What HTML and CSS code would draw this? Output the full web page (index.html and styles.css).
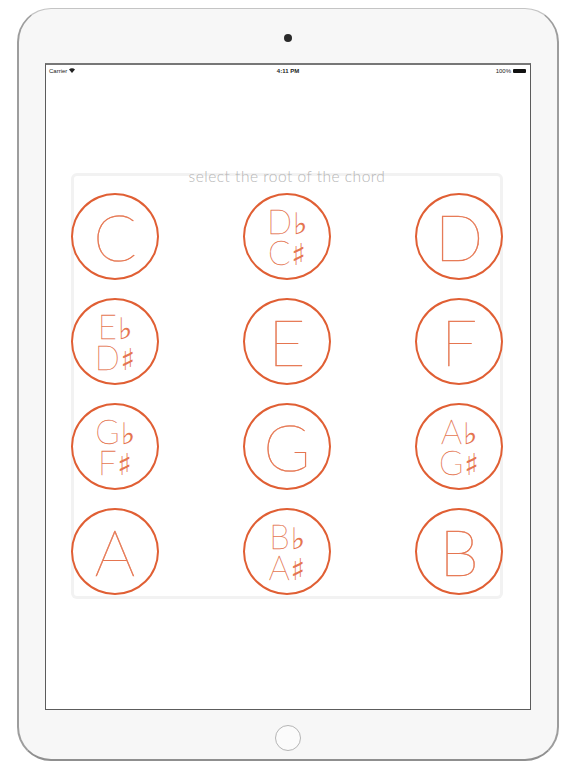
FILE: index.html
```html
<!DOCTYPE html>
<html lang="en">
<head>
    <meta charset="UTF-8">
    <meta name="viewport" content="width=device-width, initial-scale=1.0">
    <title>Chord Root</title>
    <link rel="stylesheet" href="styles.css">
</head>
<body>
    <div class="ipad">
        <div class="camera"></div>

        <div class="tela">
            <div class="status">
                <span class="carrier">Carrier
                    <svg width="6" height="5" viewBox="0 0 6 5"><path d="M0 1.6 A4.2 4.2 0 0 1 6 1.6 L3 5 Z" fill="#222"/></svg>
                </span>
                <span class="hora">4:11 PM</span>
                <span class="bateria">100%
                    <span class="pilha"></span>
                </span>
            </div>

            <main class="painel">
                <p class="titulo">select the root of the chord</p>
                <div class="notas">
                    <button class="nota">C</button>
                    <button class="nota dupla"><span class="linha">D<span class="acid">♭</span></span><span class="linha">C<span class="acid">♯</span></span></button>
                    <button class="nota">D</button>

                    <button class="nota dupla"><span class="linha">E<span class="acid">♭</span></span><span class="linha">D<span class="acid">♯</span></span></button>
                    <button class="nota">E</button>
                    <button class="nota">F</button>

                    <button class="nota dupla"><span class="linha">G<span class="acid">♭</span></span><span class="linha">F<span class="acid">♯</span></span></button>
                    <button class="nota">G</button>
                    <button class="nota dupla"><span class="linha">A<span class="acid">♭</span></span><span class="linha">G<span class="acid">♯</span></span></button>

                    <button class="nota">A</button>
                    <button class="nota dupla"><span class="linha">B<span class="acid">♭</span></span><span class="linha">A<span class="acid">♯</span></span></button>
                    <button class="nota">B</button>
                </div>
            </main>
        </div>

        <div class="home"></div>
    </div>
</body>
</html>
```

FILE: styles.css
```css
:root{
    --laranja: #e05f34;
    --letra: #e57550;
    --cinza: #f2f2f2;
}

*{
    margin: 0;
    padding: 0;
    box-sizing: border-box;
}

body{
    background-color: white;
    font-family: Lato, "Open Sans", sans-serif;
}

.ipad{
    margin: 8px 0 0 17px;
    width: 542px;
    height: 753px;
    border-radius: 34px;
    background-color: #f7f7f7;
    border: 1px solid #c4c4c4;
    border-left: 2px solid #9d9d9d;
    border-right: 2px solid #9d9d9d;
    border-bottom: 2px solid #8f8f8f;
    display: flex;
    flex-direction: column;
    align-items: center;
}

.camera{
    margin-top: 25px;
    width: 8px;
    height: 8px;
    border-radius: 50%;
    background-color: #2a2a2a;
}

.tela{
    margin-top: 21px;
    width: 486px;
    height: 647px;
    background-color: white;
    border: 1px solid #5c5c5c;
    border-top: 2px solid #777;
    display: flex;
    flex-direction: column;
    align-items: center;
}

.status{
    width: 100%;
    height: 11px;
    padding: 0 3px;
    display: flex;
    justify-content: space-between;
    align-items: center;
    font-family: "Liberation Sans", Arial, sans-serif;
    font-size: 6px;
    color: #222;
}

.carrier, .bateria{
    width: 60px;
    display: flex;
    align-items: center;
    gap: 2px;
}

.bateria{
    justify-content: flex-end;
}

.hora{
    font-weight: bold;
}

.pilha{
    width: 13px;
    height: 4px;
    background-color: #111;
    border-radius: 1px;
    margin-right: 1px;
}

.painel{
    margin-top: 97px;
    margin-left: 25px;
    align-self: flex-start;
    width: 432px;
    padding-bottom: 4px;
    border-radius: 6px;
    box-shadow: inset 0 0 0 3px var(--cinza);
    display: flex;
    flex-direction: column;
    align-items: center;
}

.titulo{
    margin-top: -6px;
    height: 18px;
    line-height: 18px;
    font-size: 15.5px;
    font-weight: 300;
    letter-spacing: 0.5px;
    color: #b5b5b5;
}

.notas{
    margin-top: 8px;
    display: grid;
    grid-template-columns: repeat(3, 88px);
    grid-auto-rows: 87px;
    column-gap: 84px;
    row-gap: 18px;
}

.nota{
    width: 88px;
    height: 87px;
    border-radius: 50%;
    border: 2px solid var(--laranja);
    background-color: white;
    color: var(--letra);
    font-family: Lato, "Open Sans", sans-serif;
    font-weight: 100;
    -webkit-text-stroke: 0.5px var(--letra);
    font-size: 64px;
    line-height: 1;
    display: flex;
    justify-content: center;
    align-items: center;
    cursor: pointer;
}

.dupla{
    flex-direction: column;
    font-size: 33px;
    padding-top: 1px;
    -webkit-text-stroke: 0.3px var(--letra);
}

.linha{
    display: block;
    height: 31px;
    line-height: 31px;
}

.acid{
    font-family: "DejaVu Sans", sans-serif;
    font-weight: normal;
    font-size: 30px;
    line-height: 0;
    margin-left: 1px;
    -webkit-text-stroke: 0;
}

.home{
    margin-top: 15px;
    width: 26px;
    height: 26px;
    border-radius: 50%;
    border: 1.5px solid #b5b5b5;
    background-color: #fbfbfb;
}
```
